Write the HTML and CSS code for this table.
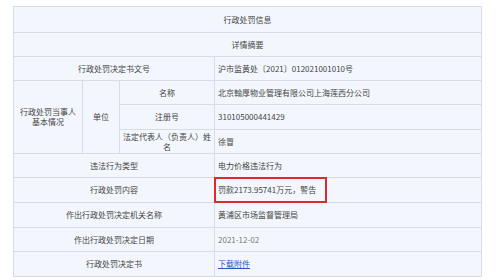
FILE: index.html
```html
<!DOCTYPE html>
<html lang="zh">
<head>
<meta charset="utf-8">
<link rel="stylesheet" href="styles.css">
</head>
<body>
<table class="info">
  <colgroup><col class="c1"><col class="c2"><col class="c3"><col class="c4"></colgroup>
  <tr class="r26"><td colspan="4" class="head">行政处罚信息</td></tr>
  <tr><td colspan="4" class="head">详情摘要</td></tr>
  <tr><td colspan="3" class="lab">行政处罚决定书文号</td><td class="val">沪市监黄处〔2021〕012021001010号</td></tr>
  <tr><td rowspan="3" class="lab">行政处罚当事人<br>基本情况</td><td rowspan="3" class="lab">单位</td><td class="lab">名称</td><td class="val">北京翰厚物业管理有限公司上海莲西分公司</td></tr>
  <tr class="r25"><td class="lab">注册号</td><td class="val">310105000441429</td></tr>
  <tr><td class="lab wrap">法定代表人（负责人）姓名</td><td class="val">徐冒</td></tr>
  <tr><td colspan="3" class="lab">违法行为类型</td><td class="val">电力价格违法行为</td></tr>
  <tr class="r25"><td colspan="3" class="lab">行政处罚内容</td><td class="val mark">罚款2173.95741万元，警告<span class="hl"></span></td></tr>
  <tr class="r25"><td colspan="3" class="lab">作出行政处罚决定机关名称</td><td class="val">黄浦区市场监督管理局</td></tr>
  <tr><td colspan="3" class="lab">作出行政处罚决定日期</td><td class="val light">2021-12-02</td></tr>
  <tr class="r25"><td colspan="3" class="lab">行政处罚决定书</td><td class="val"><a class="dl" href="#">下载附件</a></td></tr>
</table>
</body>
</html>
```
FILE: styles.css
```css
html, body {
  margin: 0;
  padding: 0;
  background: #ffffff;
}
body {
  font-family: "Noto Sans CJK SC", "Noto Sans", sans-serif;
  font-size: 8px;
  color: #444;
}
.info {
  border-collapse: collapse;
  margin: 6px 0 0 13px;
  width: 468px;
  table-layout: fixed;
}
.c1 { width: 69px; }
.c2 { width: 37px; }
.c3 { width: 95px; }
.c4 { width: 267px; }
.info td {
  border: 1px solid #d5dde8;
  background: #f3f7fd;
  height: 23px;
  padding: 0;
  line-height: 10px;
  text-align: center;
  white-space: nowrap;
}
.info tr.r26 td { height: 25px; }
.info tr.r25 td { height: 24px; }
.lab { text-align: center; }
.val {
  text-align: left !important;
  padding-left: 3px !important;
}
.wrap {
  padding: 0 1px !important;
  white-space: normal !important;
}
.light { color: #777; }
.mark { position: relative; }
.hl {
  position: absolute;
  left: -1px;
  top: -1px;
  width: 109px;
  height: 22px;
  border: 2px solid #e02a2a;
}
.dl {
  color: #2a55c8;
  text-decoration: underline;
}
```
